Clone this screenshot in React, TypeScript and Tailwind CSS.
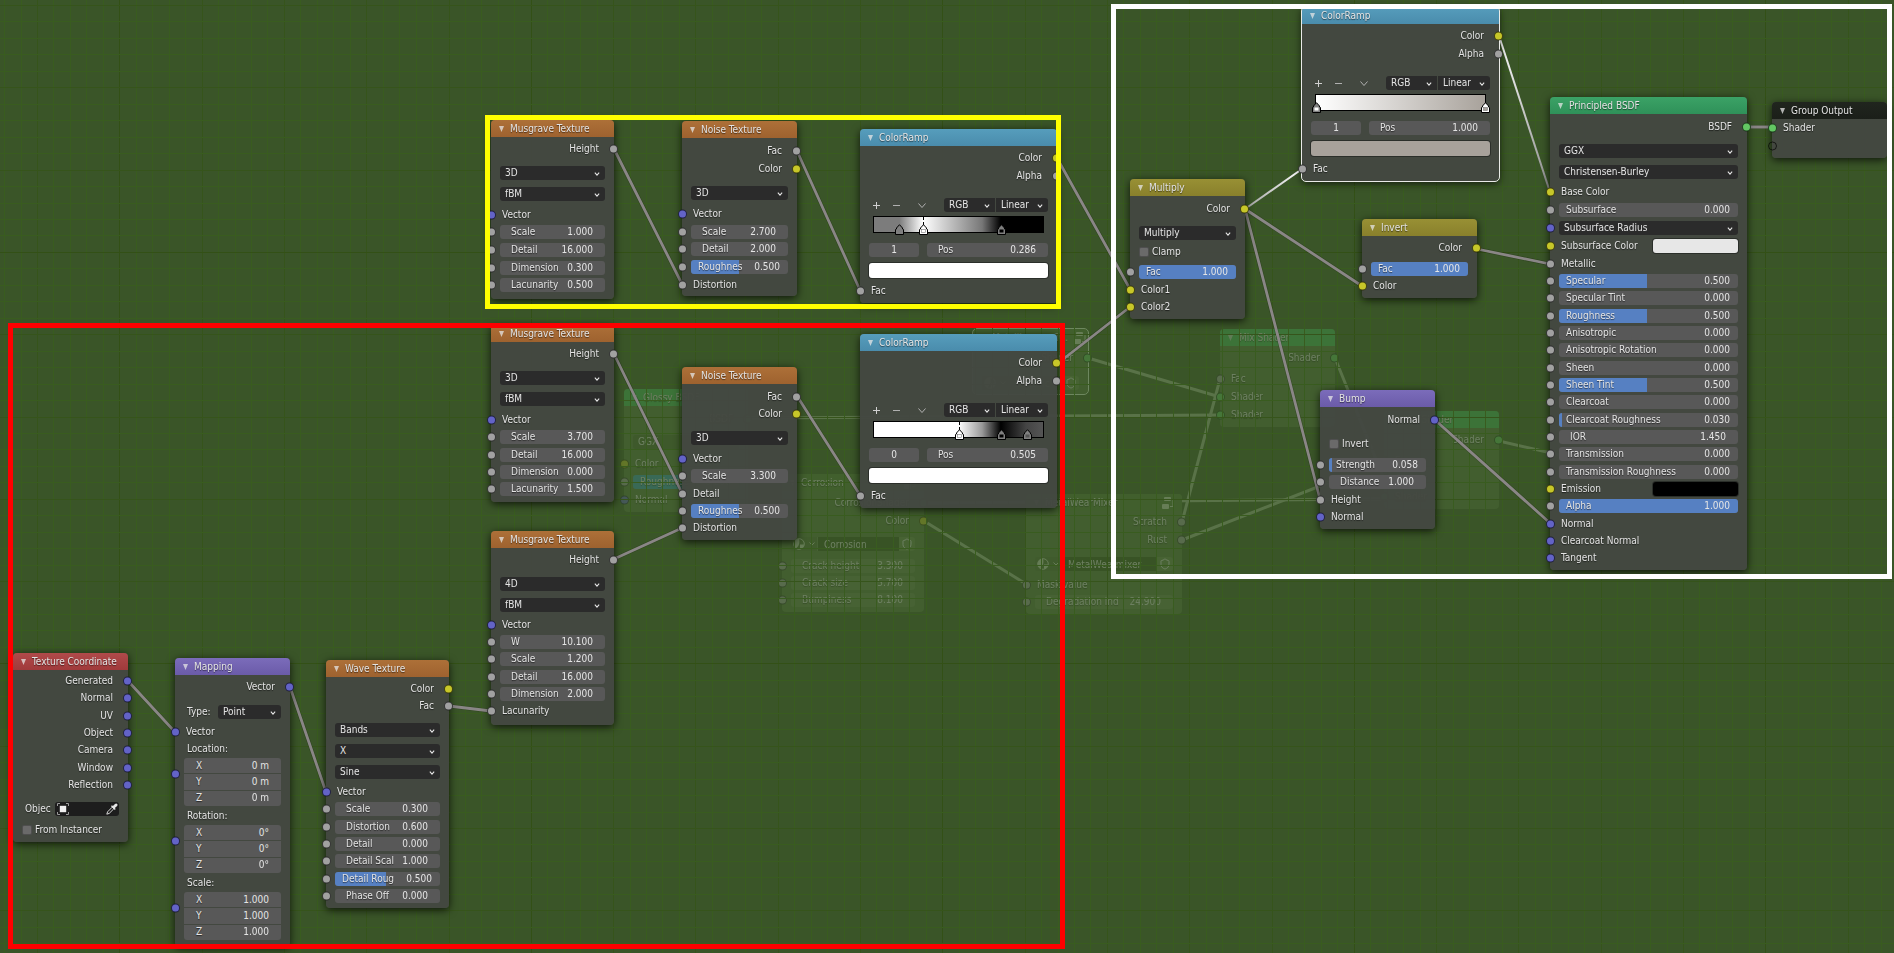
import React, { createContext, useContext } from "react";
import { Shield } from "lucide-react";

type SocketKind = "grey" | "yellow" | "blue" | "green" | "empty";
type Tone = "red" | "purple" | "orange" | "cyan" | "olive" | "green" | "black" | "ghost" | "ghostGreen";

const socketClass: Record<SocketKind, string> = {
  grey: "bg-[#a1a1a1]",
  yellow: "bg-[#c7c729]",
  blue: "bg-[#6363c7]",
  green: "bg-[#63c763]",
  empty: "bg-transparent",
};

const toneClass: Record<Tone, string> = {
  red: "from-[#b04a4a] to-[#a03a3b]",
  purple: "from-[#7b6cba] to-[#6b5ba9]",
  orange: "from-[#ad7038] to-[#9e622f]",
  cyan: "from-[#569dbc] to-[#4a8cac]",
  olive: "from-[#989034] to-[#89802c]",
  green: "from-[#3ba266] to-[#2f9159]",
  black: "from-[#20251e] to-[#1b1f19]",
  ghost: "from-[#557a3a] to-[#557a3a]",
  ghostGreen: "from-[#44bb5f] to-[#44bb5f]",
};

const GhostContext = createContext(false);

function Socket({ kind, side }: { kind: SocketKind; side: "left" | "right" }) {
  return (
    <span
      className={`absolute top-1/2 size-[9px] -translate-y-1/2 rounded-full border border-black/65 ${
        side === "left" ? "-left-1" : "-right-1"
      } ${socketClass[kind]}`}
    />
  );
}

function Node({
  title,
  tone,
  place,
  selected,
  icon,
  children,
}: {
  title: string;
  tone: Tone;
  place: string;
  selected?: boolean;
  icon?: React.ReactNode;
  children: React.ReactNode;
}) {
  const ghost = useContext(GhostContext);
  return (
    <section
      className={`absolute flex flex-col rounded ${place} ${
        ghost ? "bg-[#587541]" : "bg-[#444842]/96 shadow-[0_2px_8px_rgba(0,0,0,0.75)]"
      } ${selected ? "outline outline-white/90" : ""}`}
    >
      <header className={`flex h-[17px] shrink-0 items-center gap-1.5 rounded-t bg-linear-to-b pr-2 pl-2 ${toneClass[tone]}`}>
        <button type="button" aria-label={`Collapse ${title}`} className="shrink-0">
          <svg viewBox="0 0 5 6" className="block h-1.5 w-[5px] fill-[#e6e6e6]/75">
            <path d="M0 0H5L2.5 6Z" />
          </svg>
        </button>
        <h2 className="whitespace-nowrap">{title}</h2>
        {icon}
      </header>
      {children}
    </section>
  );
}

function Rows({ size, children }: { size: string; children: React.ReactNode }) {
  return <div className={`flex shrink-0 flex-col ${size}`}>{children}</div>;
}

function Out({ label, kind }: { label: string; kind: SocketKind }) {
  return (
    <div className="relative flex flex-1 items-center justify-end pr-[15px]">
      {label}
      <Socket kind={kind} side="right" />
    </div>
  );
}

function In({ label, kind, children }: { label?: string; kind: SocketKind; children?: React.ReactNode }) {
  return (
    <div className="relative flex flex-1 items-center justify-between pr-[9px] pl-[11px]">
      {label}
      <Socket kind={kind} side="left" />
      {children}
    </div>
  );
}

function NumberField({ label, value, fill }: { label: string; value: string; fill?: number }) {
  const ghost = useContext(GhostContext);
  const slider = fill !== undefined;
  return (
    <label
      className={`relative flex h-[14px] w-full items-center overflow-hidden rounded-[3px] ${
        ghost ? "bg-[#698351]" : "bg-[#585858]"
      } ${slider ? "pr-2 pl-[7px]" : "pr-3 pl-[11px]"}`}
    >
      {slider && (
        <span
          className={`absolute inset-y-0 left-0 ${ghost ? "bg-[#3a9ac2]" : "bg-[#5680c2]"}`}
          style={{ width: `${fill * 100}%` }}
        />
      )}
      <span className="relative whitespace-nowrap">{label}</span>
      <input className="relative w-full min-w-0 flex-1 bg-transparent text-right outline-none" defaultValue={value} />
    </label>
  );
}

function Num({ kind = "grey", ...field }: { kind?: SocketKind; label: string; value: string; fill?: number }) {
  return (
    <div className="relative flex flex-1 items-center px-[9px]">
      <Socket kind={kind} side="left" />
      <NumberField {...field} />
    </div>
  );
}

function Select({ value, label, size = "w-full rounded-[3px]" }: { value: string; label: string; size?: string }) {
  const ghost = useContext(GhostContext);
  return (
    <div className={`relative h-[14px] overflow-hidden ${ghost ? "bg-[#4a6634]" : "bg-[#2b2b2b]"} ${size}`}>
      <select aria-label={label} className="block size-full appearance-none bg-transparent pl-[5px] outline-none">
        <option>{value}</option>
      </select>
      <svg
        viewBox="0 0 7 5"
        className="pointer-events-none absolute top-1.5 right-[5px] h-1 w-1.5 fill-none stroke-[#e6e6e6]"
        strokeWidth="1.3"
      >
        <path d="M0.8 0.8L3.5 4L6.2 0.8" />
      </svg>
    </div>
  );
}

function Check({ label, gap }: { label: string; gap: string }) {
  return (
    <label className={`flex h-[14px] shrink-0 items-center gap-[3px] px-[9px] ${gap}`}>
      <input type="checkbox" className="size-2.5 appearance-none rounded-[2px] border border-black/25 bg-[#6a6a6a]" />
      {label}
    </label>
  );
}

function Swatch({ label, size }: { label: string; size: string }) {
  return <button type="button" aria-label={label} className={`rounded-[3px] shadow-[0_0_0_1px_rgba(0,0,0,0.35)] ${size}`} />;
}

function Vec({ label, values }: { label: string; values: string[] }) {
  return (
    <div className="mb-px flex shrink-0 flex-col gap-px">
      <div className="flex h-[17px] items-center pl-3">{label}</div>
      <div className="relative px-[9px]">
        <div className="absolute inset-x-0 top-0 h-8">
          <Socket kind="blue" side="left" />
        </div>
        <div className="relative flex h-12 flex-col gap-px overflow-hidden rounded-[3px]">
          {values.map((v, i) => (
            <label key={i} className="flex flex-1 items-center bg-[#585858] pr-3 pl-3">
              <span>{"XYZ"[i]}</span>
              <input className="w-full min-w-0 flex-1 bg-transparent text-right outline-none" defaultValue={v} />
            </label>
          ))}
        </div>
      </div>
    </div>
  );
}

type Stop = { at: number; color: string; active?: boolean };

function ColorRamp({
  place,
  gradient,
  stops,
  index,
  pos,
  swatch,
  selected,
}: {
  place: string;
  gradient: string;
  stops: Stop[];
  index: string;
  pos: string;
  swatch: string;
  selected?: boolean;
}) {
  return (
    <Node title="ColorRamp" tone="cyan" place={place} selected={selected}>
      <Rows size="mt-[3px] h-9">
        <Out label="Color" kind="yellow" />
        <Out label="Alpha" kind="grey" />
      </Rows>
      <div className="mt-[13px] flex h-[14px] shrink-0 items-center justify-between pr-[9px] pl-[13px]">
        <div className="flex items-center gap-[13px]">
          <button type="button" aria-label="Add stop">
            <svg viewBox="0 0 7 7" className="block size-[7px] stroke-[#d0d0d0]"><path d="M3.5 0V7M0 3.5H7" /></svg>
          </button>
          <button type="button" aria-label="Delete stop">
            <svg viewBox="0 0 7 7" className="block size-[7px] stroke-[#b0b0b0]"><path d="M0 3.5H7" /></svg>
          </button>
          <button type="button" aria-label="Ramp tools" className="ml-[5px]">
            <svg viewBox="0 0 8 7" className="block h-[7px] w-2 fill-none stroke-[#b0b0b0]"><path d="M0.5 1.5L4 5.5L7.5 1.5" /></svg>
          </button>
        </div>
        <div className="flex gap-px">
          <Select value="RGB" label="Color mode" size="w-[51px] rounded-l-[3px]" />
          <Select value="Linear" label="Interpolation" size="w-[52px] rounded-r-[3px]" />
        </div>
      </div>
      <div className={`relative mx-[13px] mt-1 h-[17px] shrink-0 border border-black ${gradient}`}>
        {stops.map((s) => (
          <span key={s.at} className="absolute inset-y-0" style={{ left: `${s.at}%` }}>
            {s.active && <span className="absolute top-0 h-2 border-l border-dashed border-black" />}
            <svg viewBox="0 0 9 11" className="absolute top-[7px] -left-1 h-[11px] w-[9px]">
              <path d="M4.5 0.7L7.5 4V5L8.5 5.5V10.5H0.5V5.5L1.5 5V4Z" fill={s.active ? "#fff" : "#808080"} stroke="#000" />
              <rect x="2.5" y="5.5" width="4" height="3" fill={s.color} stroke={s.active ? "#777" : "none"} strokeWidth="0.6" />
            </svg>
          </span>
        ))}
      </div>
      <div className="mt-2.5 flex shrink-0 gap-2 px-[9px]">
        <input
          aria-label="Active stop"
          className="h-[14px] w-[50px] rounded-[3px] bg-[#585858] text-center outline-none"
          defaultValue={index}
        />
        <div className="flex-1">
          <NumberField label="Pos" value={pos} />
        </div>
      </div>
      <div className="mt-1.5 flex h-[15px] shrink-0 px-[9px]">
        <Swatch label="Stop color" size={`w-full ${swatch}`} />
      </div>
      <Rows size="mt-1 h-[17px]">
        <In label="Fac" kind="grey" />
      </Rows>
    </Node>
  );
}

function Musgrave({
  place,
  dims,
  rows,
  children,
}: {
  place: string;
  dims: string;
  rows: string;
  children: React.ReactNode;
}) {
  return (
    <Node title="Musgrave Texture" tone="orange" place={place}>
      <Rows size="mt-[3px] h-[18px]">
        <Out label="Height" kind="grey" />
      </Rows>
      <div className="mt-2 flex shrink-0 flex-col gap-[7px] px-[9px]">
        <Select value={dims} label="Dimensions" />
        <Select value="fBM" label="Musgrave type" />
      </div>
      <Rows size={rows}>{children}</Rows>
    </Node>
  );
}

function GroupSelector({ name, gap }: { name: string; gap: string }) {
  return (
    <div className={`flex h-[14px] shrink-0 items-center px-[9px] ${gap}`}>
      <span className="flex h-full items-center gap-1 rounded-l-[3px] bg-[#506d3a] px-0.5">
        <svg viewBox="0 0 12 12" className="size-3">
          <circle cx="6" cy="6" r="5.3" fill="none" stroke="#cfdcc4" />
          <path d="M6 0.7A5.3 5.3 0 0 0 3 10.3Q7.5 7 6 0.7Z" fill="#cfdcc4" />
          <path d="M7 6.5H11A5 5 0 0 1 7 11Z" fill="#cfdcc4" />
        </svg>
        <svg viewBox="0 0 6 4" className="h-1 w-1.5 fill-none stroke-[#cfdcc4]"><path d="M0.5 0.5L3 3L5.5 0.5" /></svg>
      </span>
      <input
        aria-label="Node group"
        className="h-full w-full min-w-0 flex-1 border-l border-[#668250] bg-[#38511f] pl-1.5 outline-none"
        defaultValue={name}
      />
      <span className="flex h-full w-4 items-center justify-center rounded-r-[3px] bg-[#69854f]">
        <Shield className="size-3" strokeWidth={2} />
      </span>
    </div>
  );
}

function GroupIcon() {
  return (
    <svg viewBox="0 0 12 12" className="ml-auto size-3 shrink-0" fill="#cfdcc4">
      <rect x="2" y="0" width="7" height="4" rx="1" />
      <rect x="0" y="7" width="7" height="5" rx="1" />
      <path d="M8 9.5H11V2" fill="none" stroke="#cfdcc4" />
    </svg>
  );
}

type Link = [number, number, number, number];

const links: Link[] = [
  [128, 681, 175, 732],
  [290, 687, 326, 792],
  [449, 706, 491, 711],
  [614, 559, 682, 528],
  [614, 354, 682, 493],
  [797, 396, 860, 495],
  [614, 149, 682, 284],
  [797, 151, 860, 290],
  [1057, 158, 1130, 289],
  [1057, 364, 1130, 307],
  [1245, 209, 1362, 286],
  [1245, 209, 1320, 499],
  [1477, 249, 1550, 264],
  [1435, 420, 1550, 523],
  [1747, 127, 1772, 127],
];

const ghostLinks: Link[] = [
  [1088, 358, 1220, 397],
  [748, 418, 1220, 415],
  [1182, 522, 1220, 379],
  [1182, 540, 1384, 461],
  [924, 503, 1384, 499],
  [1335, 358, 1384, 479],
  [1499, 441, 1590, 462],
  [924, 521, 1026, 584],
];

function Grid() {
  const step = 16.46;
  const lines = Array.from({ length: 240 }, (_, i) => i - 4);
  const color = (i: number) => (i % 25 === 5 ? "#335016" : i % 5 === 0 ? "#36541b" : "#395c1f");
  return (
    <svg aria-hidden="true" className="absolute inset-0 size-full">
      {lines.map((i) => {
        const x = Math.round(37 + i * step);
        return <rect key={`x${i}`} x={x} y="0" width="1" height="100%" fill={color(i)} />;
      })}
      {lines.map((i) => {
        const y = Math.round(5 + i * step);
        return <rect key={`y${i}`} x="0" y={y} width="100%" height="1" fill={color(i - 10)} />;
      })}
    </svg>
  );
}

function MixShader({ place }: { place: string }) {
  return (
    <Node title="Mix Shader" tone="ghostGreen" place={place}>
      <Rows size="mt-[3px] h-[18px]">
        <Out label="Shader" kind="green" />
      </Rows>
      <Rows size="mt-[3px] h-[54px]">
        <In label="Fac" kind="grey" />
        <In label="Shader" kind="green" />
        <In label="Shader" kind="green" />
      </Rows>
    </Node>
  );
}

function Ghosts() {
  return (
    <GhostContext.Provider value={true}>
      <div className="absolute inset-0 opacity-30">
        <svg aria-hidden="true" className="absolute inset-0 size-full">
          {ghostLinks.map((l, i) => (
            <line key={i} x1={l[0]} y1={l[1]} x2={l[2]} y2={l[3]} stroke="#a4b894" strokeWidth="3" />
          ))}
        </svg>
        <Node
          title="Metallic wear.0..."
          tone="ghost"
          place="left-[973px] top-[329px] w-[115px] h-[65px] outline outline-[#e8ffe0]"
          icon={<GroupIcon />}
        >
          <Rows size="mt-[3px] h-[18px]">
            <Out label="Shader" kind="green" />
          </Rows>
          <GroupSelector name="Metallic" gap="mt-[9px]" />
        </Node>
        <MixShader place="left-[1220px] top-[329px] w-[115px] h-[98px]" />
        <MixShader place="left-[1384px] top-[411px] w-[115px] h-[98px]" />
        <Node title="Glossy BSDF" tone="ghostGreen" place="left-[624px] top-[389px] w-[124px] h-[123px]">
          <Rows size="mt-[4px] h-[18px]">
            <Out label="BSDF" kind="green" />
          </Rows>
          <div className="mt-[7px] px-[9px]">
            <Select value="GGX" label="Distribution" />
          </div>
          <Rows size="mt-1.5 h-[54px]">
            <In label="Color" kind="yellow" />
            <Num label="Roughness" value="0.200" fill={0.5} />
            <In label="Normal" kind="blue" />
          </Rows>
        </Node>
        <Node title="Corrosion" tone="ghost" place="left-[782px] top-[474px] w-[142px] h-[138px]" icon={<GroupIcon />}>
          <Rows size="mt-[3px] h-9">
            <Out label="CorrosionShader" kind="green" />
            <Out label="Color" kind="yellow" />
          </Rows>
          <GroupSelector name="Corrosion" gap="mt-[7px]" />
          <Rows size="mt-1.5 h-[52px]">
            <Num label="Crack height" value="3.300" />
            <Num label="Crack size" value="5.700" />
            <Num label="Bumpiness" value="8.100" />
          </Rows>
        </Node>
        <Node title="MetalWearMixer" tone="ghost" place="left-[1026px] top-[494px] w-[156px] h-[120px]" icon={<GroupIcon />}>
          <Rows size="mt-[2px] h-9">
            <Out label="Scratch" kind="grey" />
            <Out label="Rust" kind="grey" />
          </Rows>
          <GroupSelector name="MetalWearmixer" gap="mt-2" />
          <Rows size="mt-[5px] h-[35px]">
            <In label="Mask value" kind="grey" />
            <Num label="Degradation ind" value="24.900" />
          </Rows>
        </Node>
      </div>
    </GhostContext.Provider>
  );
}

export default function App() {
  return (
    <main className="relative min-h-screen w-full overflow-hidden bg-[#3a5528] font-['DejaVu_Sans_Condensed','DejaVu_Sans',sans-serif] text-[10px] leading-[14px] text-[#e4e4e4] [text-shadow:0_1px_1px_rgba(0,0,0,0.55)]">
      <Ghosts />
      <Grid />

      <svg aria-hidden="true" className="absolute inset-0 size-full">
        <defs>
          <linearGradient id="active-out" gradientUnits="userSpaceOnUse" x1="1499" y1="36" x2="1550" y2="192">
            <stop offset="0" stopColor="#fff" />
            <stop offset="1" stopColor="#8c8c8c" />
          </linearGradient>
          <linearGradient id="active-in" gradientUnits="userSpaceOnUse" x1="1245" y1="208" x2="1302" y2="169">
            <stop offset="0" stopColor="#a0a0a0" />
            <stop offset="1" stopColor="#fff" />
          </linearGradient>
        </defs>
        {links.map((l, i) => (
          <g key={i} strokeLinecap="round">
            <line x1={l[0]} y1={l[1]} x2={l[2]} y2={l[3]} stroke="#000" strokeOpacity="0.2" strokeWidth="4" />
            <line x1={l[0]} y1={l[1]} x2={l[2]} y2={l[3]} stroke="#8a8686" strokeWidth="2.8" />
          </g>
        ))}
        <line x1="1499" y1="36" x2="1550" y2="192" stroke="url(#active-out)" strokeWidth="2" />
        <line x1="1245" y1="209" x2="1302" y2="169" stroke="url(#active-in)" strokeWidth="2" />
      </svg>

      <Musgrave place="left-[491px] top-[120px] w-[123px] h-[179px]" dims="3D" rows="mt-[5px] h-[88px]">
        <In label="Vector" kind="blue" />
        <Num label="Scale" value="1.000" />
        <Num label="Detail" value="16.000" />
        <Num label="Dimension" value="0.300" />
        <Num label="Lacunarity" value="0.500" />
      </Musgrave>

      <Node title="Noise Texture" tone="orange" place="left-[682px] top-[121px] w-[115px] h-[175px]">
        <Rows size="mt-[4px] h-9">
          <Out label="Fac" kind="grey" />
          <Out label="Color" kind="yellow" />
        </Rows>
        <div className="mt-2 px-[9px]">
          <Select value="3D" label="Dimensions" />
        </div>
        <Rows size="mt-[5px] h-[89px]">
          <In label="Vector" kind="blue" />
          <Num label="Scale" value="2.700" />
          <Num label="Detail" value="2.000" />
          <Num label="Roughnes" value="0.500" fill={0.49} />
          <In label="Distortion" kind="grey" />
        </Rows>
      </Node>

      <ColorRamp
        place="left-[860px] top-[129px] w-[197px] h-[174px]"
        gradient="bg-[linear-gradient(to_right,#7c7c7c_0%,#7c7c7c_15%,#fff_29%,#ccc_42%,#777_64%,#000_75%,#000_100%)]"
        stops={[
          { at: 15, color: "#7c7c7c" },
          { at: 29, color: "#fff", active: true },
          { at: 75, color: "#000" },
        ]}
        index="1"
        pos="0.286"
        swatch="bg-white"
      />

      <Musgrave place="left-[491px] top-[325px] w-[123px] h-[177px]" dims="3D" rows="mt-[5px] h-[87px]">
        <In label="Vector" kind="blue" />
        <Num label="Scale" value="3.700" />
        <Num label="Detail" value="16.000" />
        <Num label="Dimension" value="0.000" />
        <Num label="Lacunarity" value="1.500" />
      </Musgrave>

      <Node title="Noise Texture" tone="orange" place="left-[682px] top-[367px] w-[115px] h-[173px]">
        <Rows size="mt-[4px] h-[35px]">
          <Out label="Fac" kind="grey" />
          <Out label="Color" kind="yellow" />
        </Rows>
        <div className="mt-2 px-[9px]">
          <Select value="3D" label="Dimensions" />
        </div>
        <Rows size="mt-[5px] h-[87px]">
          <In label="Vector" kind="blue" />
          <Num label="Scale" value="3.300" />
          <In label="Detail" kind="grey" />
          <Num label="Roughnes" value="0.500" fill={0.49} />
          <In label="Distortion" kind="grey" />
        </Rows>
      </Node>

      <ColorRamp
        place="left-[860px] top-[334px] w-[197px] h-[174px]"
        gradient="bg-[linear-gradient(to_right,#fff_0%,#fff_50%,#999_64%,#000_75%,#444_90%,#555_100%)]"
        stops={[
          { at: 50.5, color: "#fff", active: true },
          { at: 75, color: "#000" },
          { at: 90.5, color: "#555" },
        ]}
        index="0"
        pos="0.505"
        swatch="bg-white"
      />

      <Musgrave place="left-[491px] top-[531px] w-[123px] h-[194px]" dims="4D" rows="mt-1 h-[104px]">
        <In label="Vector" kind="blue" />
        <Num label="W" value="10.100" />
        <Num label="Scale" value="1.200" />
        <Num label="Detail" value="16.000" />
        <Num label="Dimension" value="2.000" />
        <In label="Lacunarity" kind="grey" />
      </Musgrave>

      <Node title="Texture Coordinate" tone="red" place="left-[13px] top-[653px] w-[115px] h-[189px]">
        <Rows size="mt-[2px] h-[122px]">
          <Out label="Generated" kind="blue" />
          <Out label="Normal" kind="blue" />
          <Out label="UV" kind="blue" />
          <Out label="Object" kind="blue" />
          <Out label="Camera" kind="blue" />
          <Out label="Window" kind="blue" />
          <Out label="Reflection" kind="blue" />
        </Rows>
        <div className="mt-2 flex h-[14px] shrink-0 items-center justify-between pr-[9px] pl-3">
          <span>Objec</span>
          <button
            type="button"
            aria-label="Pick object"
            className="flex h-[14px] w-16 items-center justify-between rounded-[3px] bg-[#1d1d1d] pr-px pl-0.5"
          >
            <svg viewBox="0 0 12 12" className="size-3 fill-none stroke-[#9a9a9a]">
              <path d="M0.5 3V0.5H3M9 0.5H11.5V3M11.5 9V11.5H9M3 11.5H0.5V9" />
              <rect x="2.8" y="2.8" width="6.4" height="6.4" fill="#f0f0f0" stroke="none" />
            </svg>
            <svg viewBox="0 0 12 12" className="size-3">
              <path d="M0.8 11.2L1.6 8.8L6.2 4.2L7.8 5.8L3.2 10.4Z" fill="none" stroke="#d8d8d8" />
              <path d="M5 3.2L5.9 2.3L6.9 3.1L9 0.9Q10.2 0 11.2 0.9Q12 1.9 11.1 3L8.9 5.1L9.7 6.1L8.8 7Z" fill="#e6e6e6" />
            </svg>
          </button>
        </div>
        <Check label="From Instancer" gap="mt-[7px]" />
      </Node>

      <Node title="Mapping" tone="purple" place="left-[175px] top-[658px] w-[115px] h-[288px]">
        <Rows size="mt-[3px] h-[18px]">
          <Out label="Vector" kind="blue" />
        </Rows>
        <div className="mt-[9px] flex h-[14px] shrink-0 items-center justify-between pr-[9px] pl-3">
          <span>Type:</span>
          <Select value="Point" label="Mapping type" size="w-[63px] rounded-[3px]" />
        </div>
        <Rows size="mt-1 h-[17px]">
          <In label="Vector" kind="blue" />
        </Rows>
        <Vec label="Location:" values={["0 m", "0 m", "0 m"]} />
        <Vec label="Rotation:" values={["0°", "0°", "0°"]} />
        <Vec label="Scale:" values={["1.000", "1.000", "1.000"]} />
      </Node>

      <Node title="Wave Texture" tone="orange" place="left-[326px] top-[660px] w-[123px] h-[248px]">
        <Rows size="mt-[3px] h-[35px]">
          <Out label="Color" kind="yellow" />
          <Out label="Fac" kind="grey" />
        </Rows>
        <div className="mt-2 flex shrink-0 flex-col gap-[7px] px-[9px]">
          <Select value="Bands" label="Wave type" />
          <Select value="X" label="Direction" />
          <Select value="Sine" label="Profile" />
        </div>
        <Rows size="mt-1 h-[122px]">
          <In label="Vector" kind="blue" />
          <Num label="Scale" value="0.300" />
          <Num label="Distortion" value="0.600" />
          <Num label="Detail" value="0.000" />
          <Num label="Detail Scal" value="1.000" />
          <Num label="Detail Roug" value="0.500" fill={0.49} />
          <Num label="Phase Off" value="0.000" />
        </Rows>
      </Node>

      <Node title="Multiply" tone="olive" place="left-[1130px] top-[179px] w-[115px] h-[140px]">
        <Rows size="mt-[4px] h-[18px]">
          <Out label="Color" kind="yellow" />
        </Rows>
        <div className="mt-2 px-[9px]">
          <Select value="Multiply" label="Blend mode" />
        </div>
        <Check label="Clamp" gap="mt-[5px]" />
        <Rows size="mt-1 h-[53px]">
          <Num label="Fac" value="1.000" fill={1} />
          <In label="Color1" kind="yellow" />
          <In label="Color2" kind="yellow" />
        </Rows>
      </Node>

      <ColorRamp
        place="left-[1302px] top-[7px] w-[197px] h-[174px]"
        selected
        gradient="bg-[linear-gradient(to_right,#fff_0%,#a8a29b_100%)]"
        stops={[
          { at: 0, color: "#fff" },
          { at: 100, color: "#a8a29b", active: true },
        ]}
        index="1"
        pos="1.000"
        swatch="bg-[#a8a29b]"
      />

      <Node title="Invert" tone="olive" place="left-[1362px] top-[219px] w-[115px] h-[79px]">
        <Rows size="mt-[3px] h-[18px]">
          <Out label="Color" kind="yellow" />
        </Rows>
        <Rows size="mt-[3px] h-[34px]">
          <Num label="Fac" value="1.000" fill={1} />
          <In label="Color" kind="yellow" />
        </Rows>
      </Node>

      <Node title="Bump" tone="purple" place="left-[1320px] top-[390px] w-[115px] h-[139px]">
        <Rows size="mt-[4px] h-[18px]">
          <Out label="Normal" kind="blue" />
        </Rows>
        <Check label="Invert" gap="mt-2" />
        <Rows size="mt-[5px] h-[70px]">
          <Num label="Strength" value="0.058" fill={0.03} />
          <Num label="Distance" value="1.000" />
          <In label="Height" kind="grey" />
          <In label="Normal" kind="blue" />
        </Rows>
      </Node>

      <Node title="Principled BSDF" tone="green" place="left-[1550px] top-[97px] w-[197px] h-[473px]">
        <Rows size="mt-[4px] h-[18px]">
          <Out label="BSDF" kind="green" />
        </Rows>
        <div className="mt-2 flex shrink-0 flex-col gap-[7px] px-[9px]">
          <Select value="GGX" label="Distribution" />
          <Select value="Christensen-Burley" label="Subsurface method" />
        </div>
        <Rows size="mt-1 h-[72px]">
          <In label="Base Color" kind="yellow" />
          <Num label="Subsurface" value="0.000" fill={0} />
          <div className="relative flex flex-1 items-center px-[9px]">
            <Socket kind="blue" side="left" />
            <Select value="Subsurface Radius" label="Subsurface radius" />
          </div>
          <In label="Subsurface Color" kind="yellow">
            <Swatch label="Subsurface color" size="h-[14px] w-[85px] bg-[#e7e7e7]" />
          </In>
        </Rows>
        <Rows size="h-[312px]">
          <In label="Metallic" kind="grey" />
          <Num label="Specular" value="0.500" fill={0.49} />
          <Num label="Specular Tint" value="0.000" fill={0} />
          <Num label="Roughness" value="0.500" fill={0.49} />
          <Num label="Anisotropic" value="0.000" fill={0} />
          <Num label="Anisotropic Rotation" value="0.000" fill={0} />
          <Num label="Sheen" value="0.000" fill={0} />
          <Num label="Sheen Tint" value="0.500" fill={0.49} />
          <Num label="Clearcoat" value="0.000" fill={0} />
          <Num label="Clearcoat Roughness" value="0.030" fill={0.015} />
          <Num label="IOR" value="1.450" />
          <Num label="Transmission" value="0.000" fill={0} />
          <Num label="Transmission Roughness" value="0.000" fill={0} />
          <In label="Emission" kind="yellow">
            <Swatch label="Emission color" size="h-[14px] w-[85px] bg-black" />
          </In>
          <Num label="Alpha" value="1.000" fill={1} />
          <In label="Normal" kind="blue" />
          <In label="Clearcoat Normal" kind="blue" />
          <In label="Tangent" kind="blue" />
        </Rows>
      </Node>

      <Node title="Group Output" tone="black" place="left-[1772px] top-[102px] w-[115px] h-[56px]">
        <Rows size="h-9">
          <In label="Shader" kind="green" />
          <In kind="empty" />
        </Rows>
      </Node>

      <div className="pointer-events-none absolute top-[115px] left-[485px] h-[194px] w-[576px] border-5 border-[#ffff00]" />
      <div className="pointer-events-none absolute top-[323px] left-2 h-[626px] w-[1057px] border-5 border-[#ff0000]" />
      <div className="pointer-events-none absolute top-1 left-[1111px] h-[575px] w-[781px] border-5 border-white" />
    </main>
  );
}
